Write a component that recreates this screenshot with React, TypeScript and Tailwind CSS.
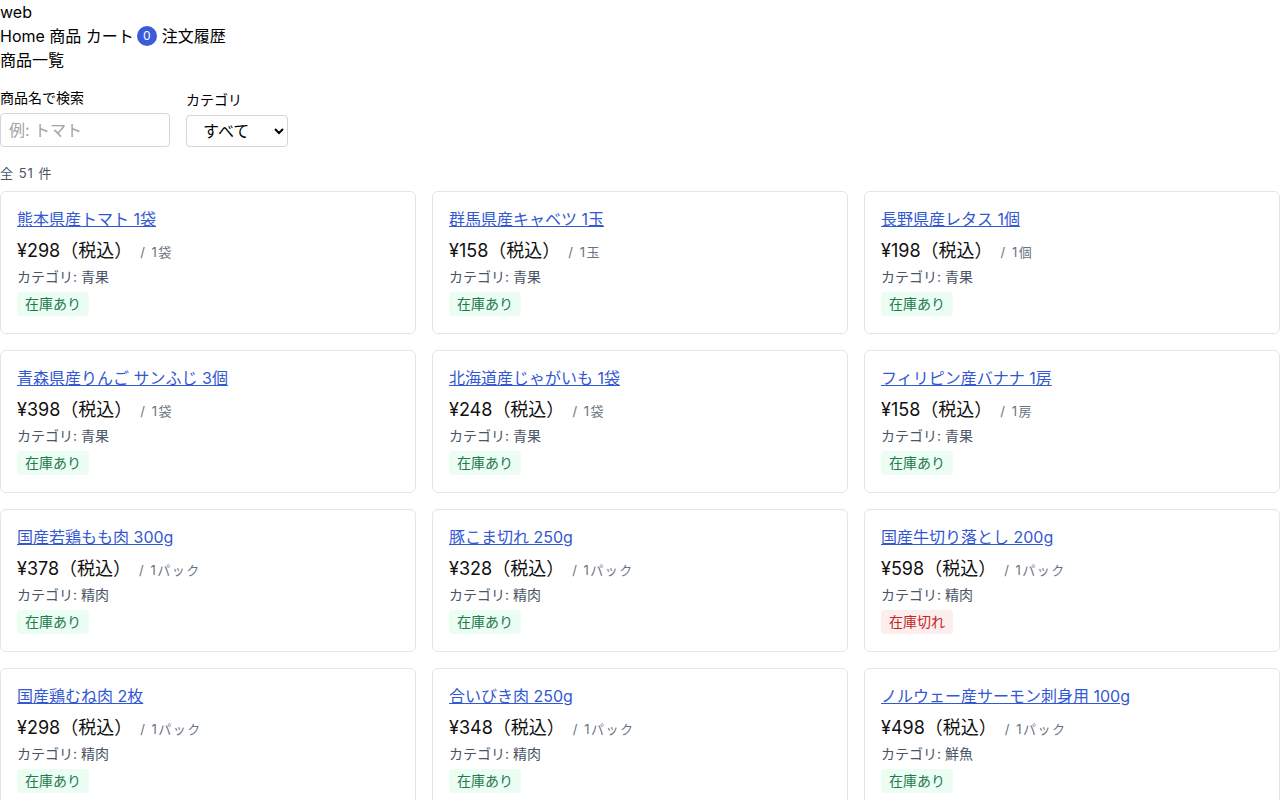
import React from "react";

type Product = {
  name: string;
  price: number;
  unit: string;
  category: string;
  inStock: boolean;
};

const products: Product[] = [
  { name: "熊本県産トマト 1袋", price: 298, unit: "1袋", category: "青果", inStock: true },
  { name: "群馬県産キャベツ 1玉", price: 158, unit: "1玉", category: "青果", inStock: true },
  { name: "長野県産レタス 1個", price: 198, unit: "1個", category: "青果", inStock: true },
  { name: "青森県産りんご サンふじ 3個", price: 398, unit: "1袋", category: "青果", inStock: true },
  { name: "北海道産じゃがいも 1袋", price: 248, unit: "1袋", category: "青果", inStock: true },
  { name: "フィリピン産バナナ 1房", price: 158, unit: "1房", category: "青果", inStock: true },
  { name: "国産若鶏もも肉 300g", price: 378, unit: "1パック", category: "精肉", inStock: true },
  { name: "豚こま切れ 250g", price: 328, unit: "1パック", category: "精肉", inStock: true },
  { name: "国産牛切り落とし 200g", price: 598, unit: "1パック", category: "精肉", inStock: false },
  { name: "国産鶏むね肉 2枚", price: 298, unit: "1パック", category: "精肉", inStock: true },
  { name: "合いびき肉 250g", price: 348, unit: "1パック", category: "精肉", inStock: true },
  { name: "ノルウェー産サーモン刺身用 100g", price: 498, unit: "1パック", category: "鮮魚", inStock: true },
];

const ProductCard: React.FC<{ p: Product }> = ({ p }) => {
  return (
    <div className="flex flex-col items-start border border-[#e3e5e8] rounded-md px-4 pt-[15px] pb-[17px] bg-white">
      <a href="#" className="text-base leading-6 text-[#3358d4] underline">{p.name}</a>
      <div className="mt-[6px] h-7 overflow-hidden whitespace-nowrap leading-7">
        <span className="text-[18px] leading-7 text-[#111]">¥{p.price}（税込）</span>
        <span className="ml-2 text-[13px] leading-7 tracking-[1.5px] text-gray-500">/ {p.unit}</span>
      </div>
      <div className="mt-[2px] text-sm leading-5 text-gray-600">カテゴリ: {p.category}</div>
      {p.inStock ? (
        <span className="mt-[5px] px-2 py-0.5 text-sm leading-5 rounded bg-[#ecfdf3] text-[#217a4e]">在庫あり</span>
      ) : (
        <span className="mt-[5px] px-2 py-0.5 text-sm leading-5 rounded bg-[#fdeeee] text-[#c02626]">在庫切れ</span>
      )}
    </div>
  );
};

const App: React.FC = () => {
  return (
    <div className="min-h-screen bg-white text-black font-['Inter','Noto_Sans_CJK_JP',sans-serif] text-base leading-6">
      <div>web</div>
      <nav className="flex items-center">
        <a href="#">Home</a>
        <span>&nbsp;</span>
        <a href="#">商品</a>
        <span>&nbsp;</span>
        <a href="#">カート</a>
        <span className="ml-[3px] mr-[5px] inline-flex items-center justify-center w-5 h-5 rounded-full bg-[#3b5bdb] text-white text-xs">0</span>
        <a href="#">注文履歴</a>
      </nav>
      <h1 className="text-base font-normal">商品一覧</h1>

      <div className="mt-4 flex items-end gap-4">
        <label className="flex flex-col gap-[5px]">
          <span className="text-sm leading-5">商品名で検索</span>
          <input
            className="w-[170px] h-[34px] px-2 border border-gray-300 rounded text-base placeholder:text-[#a3a3a3] outline-none"
            placeholder="例: トマト"
          />
        </label>
        <label className="flex flex-col gap-[5px]">
          <span className="text-sm leading-5">カテゴリ</span>
          <select className="w-[102px] h-8 pl-3 pr-1 border border-gray-300 rounded text-base bg-white">
            <option>すべて</option>
            <option>青果</option>
            <option>精肉</option>
            <option>鮮魚</option>
          </select>
        </label>
      </div>

      <div className="mt-4 mb-2 text-[13px] leading-5 tracking-[1px] text-gray-600">全 51 件</div>

      <div className="grid grid-cols-3 gap-4">
        {products.map((p) => (
          <ProductCard key={p.name} p={p} />
        ))}
      </div>
    </div>
  );
};

export default App;
